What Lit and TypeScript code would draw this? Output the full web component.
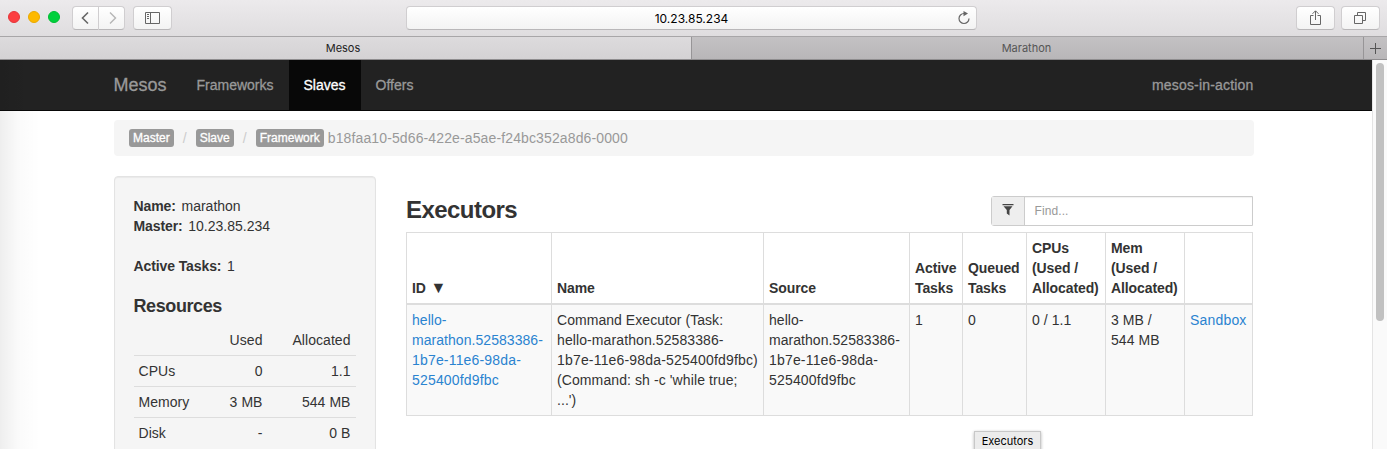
import { LitElement, html, svg, css } from "lit";
import { customElement } from "lit/decorators.js";

const resources = [
  ["CPUs", "0", "1.1"],
  ["Memory", "3 MB", "544 MB"],
  ["Disk", "-", "0 B"],
];

const columnWidths = [145, 212, 146, 53, 64, 79, 79, 68];

@customElement("browser-chrome")
class BrowserChrome extends LitElement {
  static styles = css`
    :host { display: block; font-family: Inter, Roboto, sans-serif; color: #000; }
    .bar { box-sizing: border-box; height: 36px; display: grid; grid-template-columns: 406px 571px 1fr; align-items: start; padding-top: 6px;
      background: linear-gradient(#eceaec, #dfdddf); }
    .left { display: flex; align-items: flex-start; padding-left: 8px; }
    .dot { width: 12px; height: 12px; border-radius: 50%; margin: 5px 8px 0 0; box-sizing: border-box; }
    .red { background: #fc3e41; border: 1px solid #e5363a; }
    .yellow { background: #fdb900; border: 1px solid #eaa900; }
    .green { background: #00d03c; border: 1px solid #00bd33; margin-right: 12px; }
    .btn { box-sizing: border-box; height: 24px; border: 1px solid #d0ced0; border-bottom-color: #b9b7b9; border-radius: 4px;
      background: linear-gradient(#fff, #f3f3f3); display: flex; align-items: center; justify-content: center; }
    .back { width: 27px; border-radius: 4px 0 0 4px; }
    .next { width: 26px; border-radius: 0 4px 4px 0; border-left: 0; }
    .wide { width: 39px; }
    .side { margin-left: 8px; }
    .address { position: relative; font-size: 12px; padding-top: 2px; }
    .reload { position: absolute; right: 5px; top: 4px; }
    .right { display: flex; justify-content: flex-end; gap: 6px; padding-right: 7px; }
    .tabs { box-sizing: border-box; height: 24px; display: grid; grid-template-columns: 691px 672px 24px; border-top: 1px solid #a8a6a8; border-bottom: 1px solid #8f8d8f;
      font-size: 11px; line-height: 22px; text-align: center; }
    .tab { background: linear-gradient(#dddbdd, #d4d2d4); color: #222; padding-right: 5px; }
    .tab.off, .plus { background: linear-gradient(#c3c1c3, #b8b6b8); border-left: 1px solid #979597; color: #555; }
    .tab.off { padding: 0 2px 0 0; }
    .plus { display: flex; align-items: center; justify-content: center; }
    svg { display: block; fill: none; stroke: #666; }
  `;
  render() {
    return html`
      <div class="bar">
        <div class="left">
          <span class="dot red"></span><span class="dot yellow"></span><span class="dot green"></span>
          <span class="btn back"><svg width="12" height="14">${svg`<path d="M8 1.500 2.500 7 8 12.500" stroke-width="1.600"/>`}</svg></span>
          <span class="btn next"><svg width="12" height="14">${svg`<path d="M4 1.500 9.500 7 4 12.500" stroke="#b5b5b5" stroke-width="1.400"/>`}</svg></span>
          <span class="btn wide side"><svg width="15" height="12">${svg`<path d="M.500.500h14v11H.500zM5.500.500v11M2 2.500h2M2 4.500h2M2 6.500h2"/>`}</svg></span>
        </div>
        <div class="btn address"><span>10.23.85.234</span>
          <svg class="reload" width="14" height="14">${svg`<path d="M7 2.500a5 5 0 1 0 5 5" stroke-width="1.200"/><path d="M6.500 0v5.200l4.500-2.600z" fill="#666" stroke="none"/>`}</svg>
        </div>
        <div class="right">
          <span class="btn wide"><svg width="11" height="16">${svg`<path d="M3.500 5.500h-3v9h10v-9h-3M5.500 10V1M2.500 3.800l3-3 3 3"/>`}</svg></span>
          <span class="btn wide"><svg width="13" height="13">${svg`<path d="M.500 3.500h8v8h-8zM3.500 3V.500h8v8H9"/>`}</svg></span>
        </div>
      </div>
      <div class="tabs">
        <div class="tab">Mesos</div><div class="tab off">Marathon</div>
        <div class="plus"><svg width="11" height="11">${svg`<path d="M0 5.500h11M5.500 0v11" stroke="#555"/>`}</svg></div>
      </div>`;
  }
}

@customElement("app-root")
class AppRoot extends LitElement {
  static styles = css`
    :host { display: block; position: relative; width: 1387px; height: 449px; overflow: hidden; background: #fff;
      font: 14px/20px "Liberation Sans", Arial, sans-serif; color: #333; }
    .view { display: grid; grid-template-columns: 1372px 15px; height: 389px; }
    .page { position: relative; overflow: hidden; }
    .shade { position: absolute; left: 0; top: 0; width: 40px; height: 389px; background: linear-gradient(90deg, rgba(0,0,0,.065), rgba(0,0,0,.02) 45%, rgba(0,0,0,0)); }
    .nav { box-sizing: border-box; height: 51px; background: #222; border-bottom: 1px solid #080808; color: #999; display: flex; line-height: 50px; padding-left: 113.500px;
      -webkit-text-stroke: .3px currentColor; }
    .brand { font-size: 18px; width: 68px; }
    .link { padding: 0 15px; }
    .on { background: #080808; color: #fff; }
    .cluster { margin-left: auto; padding-right: 118.500px; letter-spacing: .18px; }
    .crumbs { box-sizing: border-box; margin: 9px 118px 0 114px; height: 36px; padding: 8px 15px; background: #f5f5f5; border-radius: 4px; display: flex; color: #999; align-items: center; }
    .tag { background: #999; color: #fff; font-size: 12px; line-height: 18px; height: 18px; padding: 0 4px; border-radius: 3px; -webkit-text-stroke: .3px currentColor; }
    .sep { width: 22px; text-align: center; color: #ccc; }
    .hash { margin-left: 4px; letter-spacing: .125px; }
    .cols { display: grid; grid-template-columns: 262px 847px; gap: 30px; padding: 20px 0 0 114px; align-items: start; }
    .well { box-sizing: border-box; height: 300px; padding: 19px 19px 19px 18.500px; border: 1px solid #e3e3e3; border-radius: 4px; background: #f5f5f5; box-shadow: inset 0 1px 1px rgba(0,0,0,.05); }
    .well b { margin-right: 1.800px; letter-spacing: -.1px; }
    .gap { margin-top: 20px; }
    h4 { margin: 20px 0 9px; font-size: 18px; line-height: 20px; font-weight: 700; letter-spacing: -.4px; }
    .res { width: 222px; border-spacing: 0; table-layout: fixed; }
    .res td, .res th { font-weight: 400; text-align: right; padding: 5px; border-top: 1px solid #ddd; letter-spacing: .05px; }
    .res th { border-top: 0; }
    .res td:first-child { text-align: left; }
    .c1 { width: 76px; } .c2 { width: 58px; }
    .head { display: flex; justify-content: space-between; align-items: flex-start; padding-top: 20px; height: 36px; }
    h2 { margin: 0; font-size: 24px; line-height: 28px; letter-spacing: -.55px; }
    .find { box-sizing: border-box; display: flex; width: 262px; height: 30px; border: 1px solid #ccc; border-radius: 3px 0 0 3px; font-size: 12px; line-height: 28px; color: #999; box-shadow: inset 0 1px 1px rgba(0,0,0,.06); }
    .addon { width: 32px; background: #eee; border-right: 1px solid #ccc; display: flex; align-items: center; justify-content: center; }
    .find svg { margin-bottom: 2px; }
    .find span { padding-left: 9.500px; letter-spacing: .1px; }
    .exec { box-sizing: border-box; width: 847px; border-spacing: 0; table-layout: fixed; border: solid #ddd; border-width: 1px 1px 1px 0; }
    .exec th, .exec td { box-sizing: border-box; padding: 5px 0 5px 5px; border-left: 1px solid #ddd; text-align: left; white-space: nowrap; }
    .exec th { vertical-align: bottom; border-bottom: 2px solid #ddd; letter-spacing: -.1px; }
    .exec td { vertical-align: top; background: #f9f9f9; letter-spacing: .05px; }
    .loose { letter-spacing: .18px; }
    .mid { letter-spacing: .1px; }
    .arrow { font-size: 16px; line-height: 16px; margin-left: 1px; }
    .exec .blue { color: #2a83d0; }
    .rail { border-left: 1px solid #e4e4e4; background: #fafafa; padding: 3px 0 0 3px; }
    .thumb { width: 8px; height: 258px; border-radius: 4px; background: #c1c1c1; }
    .tip { position: absolute; left: 974px; top: 431px; width: 65px; height: 20px; border: 1px solid #c8c8c8; background: #ececec; box-shadow: 0 1px 3px rgba(0,0,0,.3);
      font: 11px/19px Inter, sans-serif; color: #000; text-align: center; }
  `;
  render() {
    const taskId = html`hello-<br>marathon.52583386-<br><span class="loose">1b7e-11e6-98da-<br>525400fd9fbc</span>`;
    return html`
      <browser-chrome></browser-chrome>
      <div class="view">
        <div class="page">
          <div class="nav"><span class="brand">Mesos</span><span class="link">Frameworks</span><span class="link on">Slaves</span><span class="link">Offers</span><span class="cluster">mesos-in-action</span></div>
          <div class="crumbs"><span class="tag">Master</span><span class="sep">/</span><span class="tag">Slave</span><span class="sep">/</span><span class="tag">Framework</span><span class="hash">b18faa10-5d66-422e-a5ae-f24bc352a8d6-0000</span></div>
          <div class="cols">
            <div class="well">
              <div><b>Name:</b> marathon</div>
              <div><b>Master:</b> 10.23.85.234</div>
              <div class="gap"><b>Active Tasks:</b> 1</div>
              <h4>Resources</h4>
              <table class="res">
                <colgroup><col class="c1"><col class="c2"><col></colgroup>
                <tr><th></th><th>Used</th><th>Allocated</th></tr>
                ${resources.map((r) => html`<tr>${r.map((c) => html`<td>${c}</td>`)}</tr>`)}
              </table>
            </div>
            <div>
              <div class="head"><h2>Executors</h2>
                <div class="find"><div class="addon"><svg width="12" height="12"><path d="M.500 0h11v1.300H.500zM1.500 2.300h9L7.500 6v5.500L4.800 9.500V6z" fill="#444"/></svg></div><span>Find...</span></div>
              </div>
              <table class="exec">
                <colgroup>${columnWidths.map((w) => html`<col style="width:${w}px">`)}</colgroup>
                <tr><th>ID <span class="arrow">▼</span></th><th>Name</th><th>Source</th><th>Active<br>Tasks</th><th>Queued<br>Tasks</th><th>CPUs<br>(Used /<br>Allocated)</th><th>Mem<br>(Used /<br>Allocated)</th><th></th></tr>
                <tr>
                  <td class="blue">${taskId}</td>
                  <td>Command Executor (Task:<br><span class="mid">hello-marathon.52583386-</span><br><span class="loose">1b7e-11e6-98da-525400fd9fbc)</span><br><span class="mid">(Command: sh -c 'while true;</span><br>...')</td>
                  <td>${taskId}</td>
                  <td>1</td><td>0</td><td>0 / 1.1</td><td>3 MB /<br>544 MB</td><td class="blue"><span class="loose">Sandbox</span></td>
                </tr>
              </table>
            </div>
          </div>
          <div class="shade"></div>
        </div>
        <div class="rail"><div class="thumb"></div></div>
      </div>
      <div class="tip">Executors</div>`;
  }
}
